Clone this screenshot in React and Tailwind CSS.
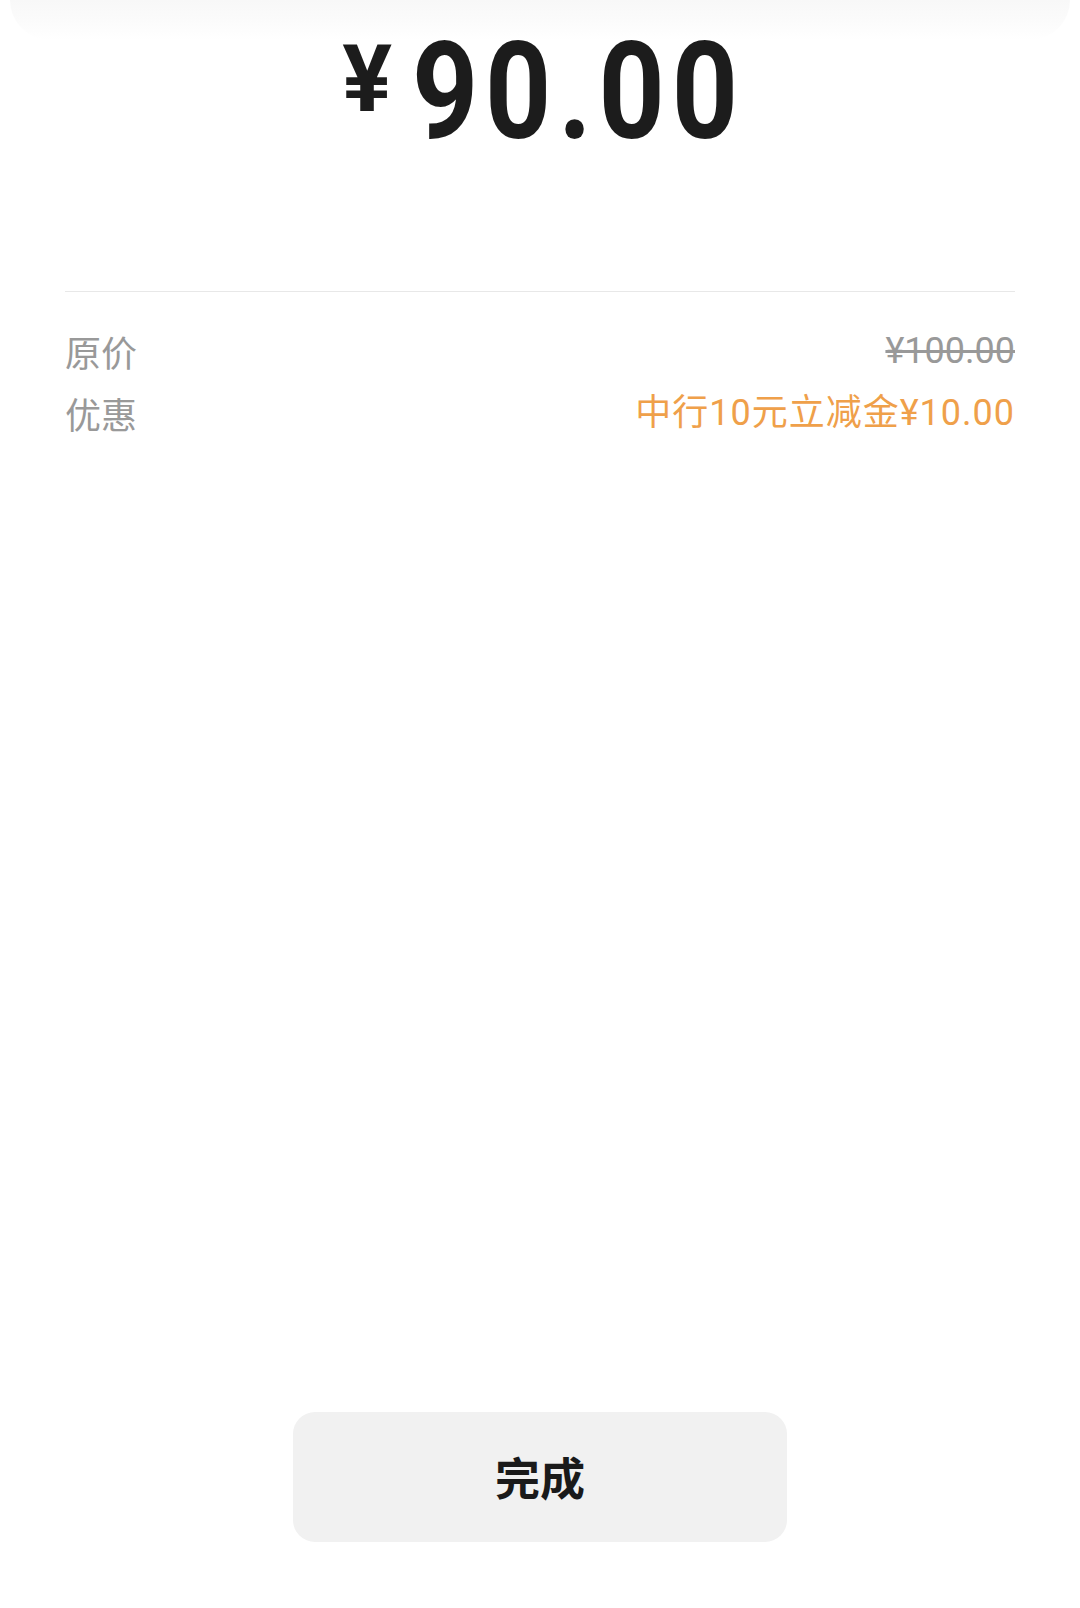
import React from "react";

const PayResult = () => {
    const rows = [
        { label: "原价", value: "¥100.00", struck: true },
        { label: "优惠", value: "中行10元立减金¥10.00", struck: false },
    ];

    return (
        <div className="relative flex min-h-[1608px] w-full flex-col bg-white font-['Roboto','Noto_Sans_CJK_SC',sans-serif]">
            {/* shadow of the sheet above */}
            <div className="pointer-events-none absolute top-0 left-[10px] right-[10px] h-[40px] rounded-b-[160px] bg-linear-to-b from-[#f8f8f8] via-[#fbfbfb] to-white"></div>

            <div className="relative flex justify-center items-start pt-[24px] text-[#1c1c1c]">
                <span className="mt-[9px] mr-[20px] text-[93px] font-bold leading-none">¥</span>
                <span className="inline-block origin-left scale-x-[0.85] -mr-[66px] text-[136px] font-bold leading-none tracking-[8px]">90.00</span>
            </div>

            <div className="mx-[65px] mt-[131px] h-px bg-[#e8e8e8]"></div>

            <div className="mx-[65px] pt-[28px]">
                {rows.map((row) => (
                    <div key={row.label} className="flex justify-between items-center h-[62px] text-[36px]">
                        <span className="text-[#999999] font-['Noto_Sans_CJK_SC',sans-serif] font-normal">{row.label}</span>
                        <span className={row.struck ? "text-[#999999] line-through" : "text-[#efa04a] tracking-[1px]"}>{row.value}</span>
                    </div>
                ))}
            </div>

            <div className="flex-1"></div>

            <div className="flex justify-center pb-[66px]">
                <button className="flex h-[130px] w-[494px] items-center justify-center rounded-[22px] bg-[#f1f1f1] text-[45px] font-bold text-[#1a1a1a] font-['Noto_Sans_CJK_SC',sans-serif]">
                    完成
                </button>
            </div>
        </div>
    );
};

export default function App() {
    return <PayResult />;
}
